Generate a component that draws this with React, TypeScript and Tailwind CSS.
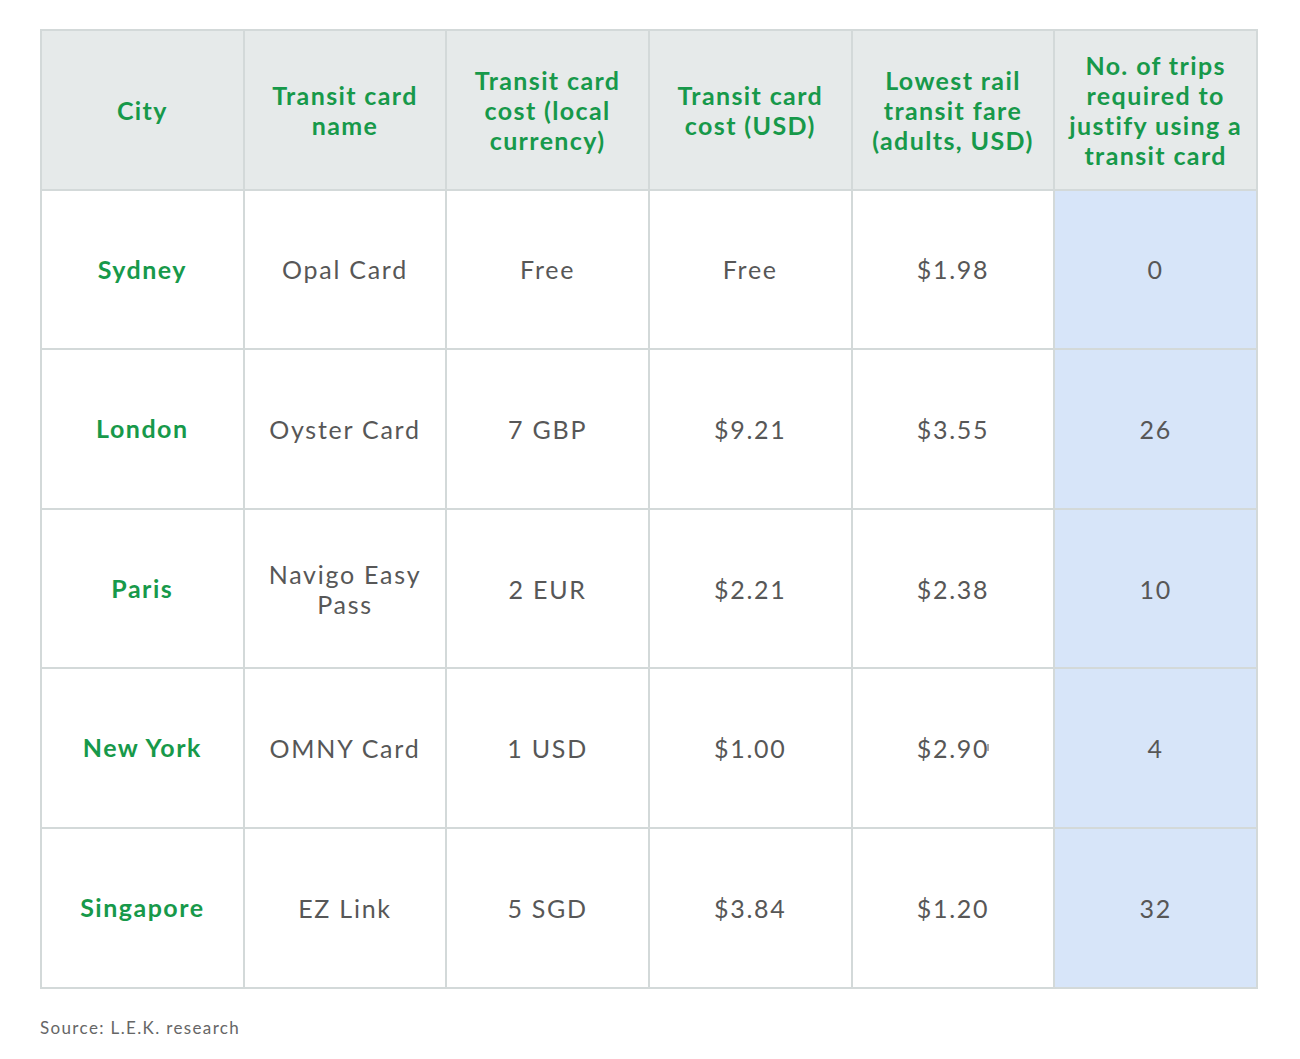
import React from 'react';

interface Row {
    city: string;
    card: string;
    local: string;
    usd: string;
    fare: string;
    trips: string;
}

const headers = [
    ['City'],
    ['Transit card', 'name'],
    ['Transit card', 'cost (local', 'currency)'],
    ['Transit card', 'cost (USD)'],
    ['Lowest rail', 'transit fare', '(adults, USD)'],
    ['No. of trips', 'required to', 'justify using a', 'transit card'],
];

const rows: Row[] = [
    { city: 'Sydney', card: 'Opal Card', local: 'Free', usd: 'Free', fare: '$1.98', trips: '0' },
    { city: 'London', card: 'Oyster Card', local: '7 GBP', usd: '$9.21', fare: '$3.55', trips: '26' },
    { city: 'Paris', card: 'Navigo Easy Pass', local: '2 EUR', usd: '$2.21', fare: '$2.38', trips: '10' },
    { city: 'New York', card: 'OMNY Card', local: '1 USD', usd: '$1.00', fare: '$2.90', trips: '4' },
    { city: 'Singapore', card: 'EZ Link', local: '5 SGD', usd: '$3.84', fare: '$1.20', trips: '32' },
];

const cell = 'border-2 border-[#d3d9d9] text-center align-middle px-2';
const body = 'text-[25px] leading-[30px] tracking-[0.07em] text-[#575757]';

export default function App() {
    return (
        <div className="min-h-screen bg-white pt-[29px] pl-[40px] font-['Lato','Noto_Sans',sans-serif]">
            <table className="w-[1218px] border-collapse table-fixed">
                <thead>
                    <tr className="h-[159.6px] bg-[#e6eaea]">
                        {headers.map((lines, i) => (
                            <th
                                key={i}
                                className={`${cell} text-[25px] leading-[30px] font-bold tracking-[0.055em] text-[#17994a]`}
                            >
                                {lines.map((l) => (
                                    <div key={l} className="whitespace-nowrap">{l}</div>
                                ))}
                            </th>
                        ))}
                    </tr>
                </thead>
                <tbody>
                    {rows.map((r) => (
                        <tr key={r.city} className="h-[159.6px]">
                            <td className={`${cell} text-[25px] font-bold tracking-[0.06em] text-[#17994a]`}>
                                {r.city}
                            </td>
                            <td className={`${cell} ${body}`}>
                                {r.card === 'Navigo Easy Pass' ? (
                                    <>
                                        <div>Navigo Easy</div>
                                        <div>Pass</div>
                                    </>
                                ) : (
                                    r.card
                                )}
                            </td>
                            <td className={`${cell} ${body}`}>{r.local}</td>
                            <td className={`${cell} ${body}`}>{r.usd}</td>
                            <td className={`${cell} ${body}`}>
                                {r.fare}
                                {r.city === 'New York' && (
                                    <span className="inline-block w-[2px] h-[7px] bg-[#aaa] align-[7px] -ml-[2px]" />
                                )}
                            </td>
                            <td className={`${cell} ${body} bg-[#d7e5f9]`}>{r.trips}</td>
                        </tr>
                    ))}
                </tbody>
            </table>
            <p className="mt-[29px] text-[17px] leading-[20px] tracking-[0.08em] text-[#666]">
                Source: L.E.K. research
            </p>
        </div>
    );
}
